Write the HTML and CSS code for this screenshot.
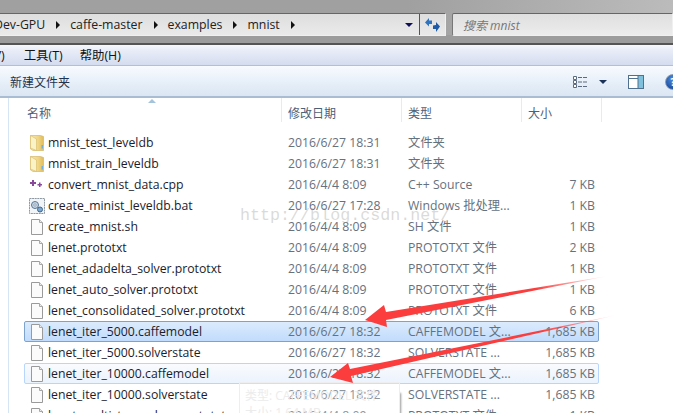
FILE: index.html
```html
<!DOCTYPE html>
<html lang="zh-CN">
<head>
  <meta charset="UTF-8" />
  <title>mnist</title>
  <link rel="stylesheet" href="styles.css">
</head>
<body>
  <svg class="defs" width="0" height="0">
    <defs>
      <linearGradient id="folderFill" x1="0" y1="0" x2="1" y2="0">
        <stop offset="0" stop-color="#f8eab0"/><stop offset="0.6" stop-color="#efd584"/><stop offset="1" stop-color="#e0bc5c"/>
      </linearGradient>
      <symbol id="folder" viewBox="0 0 16 16">
        <path d="M1.500.5h10l3 1v14H4l-2.500-1.500z" fill="url(#folderFill)" stroke="#cfae5a" stroke-width=".6"/>
        <path d="M1.500.5l6 3.500v11.500l-6-2.500z" fill="#fbf3c8" stroke="#d9bb68" stroke-width=".6"/>
        <rect x="12.500" y="10" width="1.500" height="3.500" fill="#6fb0e0"/>
      </symbol>
      <symbol id="doc" viewBox="0 0 16 16">
        <path d="M2.500.5h8l3 3v12h-11z" fill="#fbfbfb" stroke="#9a9a9a"/>
        <path d="M10.500.5v3h3" fill="#ececec" stroke="#a8a8a8"/>
      </symbol>
      <symbol id="cpp" viewBox="0 0 16 16">
        <path d="M1 5h2V3h2v2h2v2H5v2H3V7H1zM8.500 7h1.500V5.500h1.500V7H13v1.500h-1.500V10H10V8.500H8.500z" fill="#8a4a9c"/>
      </symbol>
      <symbol id="bat" viewBox="0 0 16 16">
        <rect x=".5" y=".5" width="15" height="15" fill="#f2f5f8" stroke="#8d98a3" stroke-dasharray="2 .6"/>
        <circle cx="6" cy="7" r="3.500" fill="#c9d7e4" stroke="#5a7692"/>
        <circle cx="6" cy="7" r="1.200" fill="#fff" stroke="#5a7692" stroke-width=".6"/>
        <circle cx="11" cy="11.500" r="2.500" fill="#7fa8d0" stroke="#3d6690"/>
      </symbol>
    </defs>
  </svg>

  <div class="chrome">
    <div class="address">
      <div class="crumbs">
        <span class="clip">Dev-GPU</span><i class="crumb-arrow"></i>
        <span>caffe-master</span><i class="crumb-arrow"></i>
        <span>examples</span><i class="crumb-arrow"></i>
        <span>mnist</span><i class="crumb-arrow"></i>
      </div>
      <div class="drop"><i class="caret"></i></div>
      <div class="refresh">
        <svg width="16" height="14" viewBox="0 0 16 14">
          <path d="M0 4.500L4 0v2.500h3v3.500H4v2.500z" fill="#2f74c0"/>
          <path d="M15 8.500L11 14v-3H8V7.500l3-.5V4z" fill="#1f5aa8"/>
        </svg>
      </div>
    </div>
    <div class="search">搜索 mnist</div>
  </div>

  <div class="menubar">
    <span class="menu-cut">(V)</span>
    <span>工具(T)</span>
    <span>帮助(H)</span>
  </div>

  <div class="toolbar">
    <span class="new-folder">新建文件夹</span>
    <div class="tools">
      <svg class="view-icon" width="15" height="12" viewBox="0 0 15 12">
        <path d="M.5.500h3v3h-3zM.5 4.500h3v3h-3zM.5 8.500h3v3h-3z" fill="#fff" stroke="#5b6b7d"/>
        <path d="M5 1.500h9M5 6h9M5 10.500h9" stroke="#5b6b7d" stroke-dasharray="4 1"/>
      </svg>
      <i class="view-caret"></i>
      <svg class="pane-icon" width="16" height="14" viewBox="0 0 16 14">
        <rect x=".5" y=".5" width="15" height="13" fill="#fff" stroke="#51708e"/>
        <rect x="10" y="1" width="5" height="12" fill="#7fc0dc"/>
        <path d="M1 3.500h9M10 1v12" stroke="#51708e"/>
      </svg>
      <div class="help">?</div>
    </div>
  </div>

  <div class="content">
    <div class="nav-pane"></div>
    <div class="files">
      <div class="file-head">
        <span class="col-name">名称<i class="sort-mark"></i></span>
        <span class="col-date">修改日期</span>
        <span class="col-type">类型</span>
        <span class="col-size">大小</span>
      </div>
      <div class="rows">
        <div class="row"><svg class="icon"><use href="#folder"/></svg><span class="name">mnist_test_leveldb</span><span class="date">2016/6/27 18:31</span><span class="type">文件夹</span><span class="size"></span></div>
        <div class="row"><svg class="icon"><use href="#folder"/></svg><span class="name">mnist_train_leveldb</span><span class="date">2016/6/27 18:31</span><span class="type">文件夹</span><span class="size"></span></div>
        <div class="row"><svg class="icon"><use href="#cpp"/></svg><span class="name">convert_mnist_data.cpp</span><span class="date">2016/4/4 8:09</span><span class="type">C++ Source</span><span class="size">7 KB</span></div>
        <div class="row"><svg class="icon"><use href="#bat"/></svg><span class="name">create_minist_leveldb.bat</span><span class="date">2016/6/27 17:28</span><span class="type">Windows 批处理...</span><span class="size">1 KB</span></div>
        <div class="row"><svg class="icon"><use href="#doc"/></svg><span class="name">create_mnist.sh</span><span class="date">2016/4/4 8:09</span><span class="type">SH 文件</span><span class="size">1 KB</span></div>
        <div class="row"><svg class="icon"><use href="#doc"/></svg><span class="name">lenet.prototxt</span><span class="date">2016/4/4 8:09</span><span class="type">PROTOTXT 文件</span><span class="size">2 KB</span></div>
        <div class="row"><svg class="icon"><use href="#doc"/></svg><span class="name">lenet_adadelta_solver.prototxt</span><span class="date">2016/4/4 8:09</span><span class="type">PROTOTXT 文件</span><span class="size">1 KB</span></div>
        <div class="row"><svg class="icon"><use href="#doc"/></svg><span class="name">lenet_auto_solver.prototxt</span><span class="date">2016/4/4 8:09</span><span class="type">PROTOTXT 文件</span><span class="size">1 KB</span></div>
        <div class="row"><svg class="icon"><use href="#doc"/></svg><span class="name">lenet_consolidated_solver.prototxt</span><span class="date">2016/4/4 8:09</span><span class="type">PROTOTXT 文件</span><span class="size">6 KB</span></div>
        <div class="row selected"><svg class="icon"><use href="#doc"/></svg><span class="name">lenet_iter_5000.caffemodel</span><span class="date">2016/6/27 18:32</span><span class="type">CAFFEMODEL 文...</span><span class="size">1,685 KB</span></div>
        <div class="row"><svg class="icon"><use href="#doc"/></svg><span class="name">lenet_iter_5000.solverstate</span><span class="date">2016/6/27 18:32</span><span class="type">SOLVERSTATE ...</span><span class="size">1,685 KB</span></div>
        <div class="row hovered"><svg class="icon"><use href="#doc"/></svg><span class="name">lenet_iter_10000.caffemodel</span><span class="date">2016/6/27 18:32</span><span class="type">CAFFEMODEL 文...</span><span class="size">1,685 KB</span></div>
        <div class="row"><svg class="icon"><use href="#doc"/></svg><span class="name">lenet_iter_10000.solverstate</span><span class="date">2016/6/27 18:32</span><span class="type">SOLVERSTATE ...</span><span class="size">1,685 KB</span></div>
        <div class="row"><svg class="icon"><use href="#doc"/></svg><span class="name">lenet_multistep_solver.prototxt</span><span class="date">2016/4/4 8:09</span><span class="type">PROTOTXT 文件</span><span class="size">1 KB</span></div>
      </div>
    </div>
  </div>

  <!-- stuff lying over the list -->
  <div class="tooltip">
    <div>类型: CAFFEMODEL 文件</div>
    <div>大小: 1.64 MB</div>
  </div>
  <div class="watermark">http://blog.csdn.net/</div>
  <svg class="arrows" width="673" height="413" viewBox="0 0 673 413">
    <defs>
      <linearGradient id="tail1" gradientUnits="userSpaceOnUse" x1="608" y1="276" x2="400" y2="312">
        <stop offset="0" stop-color="#ff3b3b" stop-opacity="0"/><stop offset=".35" stop-color="#fb3d3d"/>
      </linearGradient>
      <linearGradient id="tail2" gradientUnits="userSpaceOnUse" x1="617" y1="315" x2="400" y2="360">
        <stop offset="0" stop-color="#ff3b3b" stop-opacity="0"/><stop offset=".35" stop-color="#fb3d3d"/>
      </linearGradient>
    </defs>
    <path d="M608 276L386 312L384 305L365 320L387 327L386 320z" fill="url(#tail1)"/>
    <path d="M617 315L350 369L348 363L330 377L353 383L351 376z" fill="url(#tail2)"/>
  </svg>
</body>
</html>
```

FILE: styles.css
```css
* { box-sizing: border-box; margin: 0; padding: 0; }
html, body { height: 413px; overflow: hidden; }
body {
  position: relative;
  width: 673px;
  background: #fff;
  font-family: "Open Sans", "Noto Sans CJK SC", sans-serif;
  font-size: 12px;
  color: #1e2a3a;
}
.defs { position: absolute; }

/* title area */
.chrome {
  height: 45px;
  display: flex;
  gap: 6px;
  padding-top: 13px;
  background: linear-gradient(100deg, #a0a0a0 60%, #bcbcbc 100%);
  border-bottom: 2px solid #555;
  box-shadow: inset 0 -8px 0 #9c9c9c;
}
.address {
  width: 446px;
  height: 23px;
  display: flex;
  background: linear-gradient(#dedede, #eaeaea);
  border: 1px solid #f0f0f0;
  border-top-color: #666;
  border-left: 0;
}
.crumbs {
  flex: 1;
  display: flex;
  align-items: center;
  overflow: hidden;
  color: #222;
  font-size: 12.3px;
}
.crumbs .clip { margin-left: -6px; }
.crumb-arrow {
  width: 0; height: 0;
  margin: 0 10px 0 11px;
  border-left: 4px solid #111;
  border-top: 4px solid transparent;
  border-bottom: 4px solid transparent;
}
.drop {
  width: 21px;
  display: flex; align-items: center; justify-content: center;
  border-right: 1px solid #555;
}
.caret {
  width: 0; height: 0;
  border-top: 4px solid #10105a;
  border-left: 4px solid transparent;
  border-right: 4px solid transparent;
}
.refresh {
  width: 25px;
  display: flex; align-items: center; justify-content: center;
}
.search {
  flex: 1;
  height: 23px;
  padding: 2px 0 0 10px;
  background: linear-gradient(#dfdfdf, #ececec);
  border: 1px solid #f0f0f0;
  border-top-color: #666;
  border-left-color: #777;
  border-radius: 2px 0 0 2px;
  color: #777;
  font-style: italic;
}

.menubar {
  height: 21px;
  display: flex;
  gap: 17px;
  align-items: center;
  background: linear-gradient(#f6f8fd, #e9edf8 25%, #d4dcef);
  border-bottom: 1px solid #b4bfd4;
  color: #111;
  font-size: 12.4px;
}
.menu-cut { margin-left: -10px; margin-right: 2px; }

.toolbar {
  height: 32px;
  display: flex;
  align-items: center;
  justify-content: space-between;
  padding: 2px 0 0 10px;
  background: linear-gradient(#f8fbff, #e8f0f9 50%, #dbe6f3);
  border-bottom: 2px solid #a9bcd3;
  color: #1e3450;
}
.tools { display: flex; align-items: center; }
.view-icon { margin-right: 11px; }
.view-caret {
  width: 0; height: 0;
  margin-right: 21px;
  border-top: 4px solid #1c3358;
  border-left: 4px solid transparent;
  border-right: 4px solid transparent;
}
.pane-icon { margin-right: 21px; }
.help {
  width: 16px; height: 16px;
  margin-right: -8px;
  border-radius: 50%;
  background: radial-gradient(circle at 50% 30%, #4d8ee0, #123f92);
  border: 1px solid #8a9ab0;
  color: #fff;
  font-size: 10px;
  font-weight: 700;
  line-height: 14px;
  text-align: center;
}

.content { display: flex; height: 315px; }
.nav-pane {
  width: 9px;
  background: #fff;
  border-right: 1px solid #d6e5f5;
}
.files { flex: 1; min-width: 0; }
.file-head {
  height: 24px;
  display: grid;
  grid-template-columns: 273px 120px 120px 80px;
  color: #4c607a;
}
.file-head span {
  position: relative;
  padding: 6px 0 0 6px;
  border-right: 1px solid #e3ebf5;
}
.col-name { padding-left: 18px !important; }
.sort-mark {
  position: absolute;
  left: 139px;
  top: 1px;
  width: 0; height: 0;
  border-bottom: 4px solid #a4c4dc;
  border-left: 4px solid transparent;
  border-right: 4px solid transparent;
}
.rows { padding: 10px 0 0 15px; }
.row {
  width: 575px;
  height: 21px;
  display: grid;
  grid-template-columns: 23px 240px 120px 1fr 83px;
  align-items: center;
  border: 1px solid transparent;
  border-radius: 2px;
  font-size: 12.25px;
  line-height: 19px;
  white-space: nowrap;
}
.icon { width: 16px; height: 16px; margin-left: 4px; }
.name { color: #1c1c2c; }
.date, .type, .size { color: #66717e; }
.size { text-align: right; padding-right: 3px; }
.selected {
  border-color: #7da2ce;
  background: linear-gradient(#dcebfc, #c1dcfc);
}
.hovered {
  border-color: #b8d6fb;
  background: linear-gradient(#fafbfd, #ebf3fd);
}

/* overlays */
.tooltip {
  position: absolute;
  left: 239px;
  top: 382px;
  width: 161px;
  height: 40px;
  padding: 4px 0 0 5px;
  background: rgba(255, 255, 255, 0.25);
  border: 1px solid #eeeeee;
  box-shadow: 2px 10px 2px -1px #999;
  color: #ececec;
  line-height: 17px;
}
.watermark {
  position: absolute;
  left: 240px;
  top: 206px;
  font-family: "Liberation Mono", monospace;
  font-size: 16.7px;
  color: rgba(150, 150, 140, 0.35);
}
.arrows { position: absolute; left: 0; top: 0; }
```
